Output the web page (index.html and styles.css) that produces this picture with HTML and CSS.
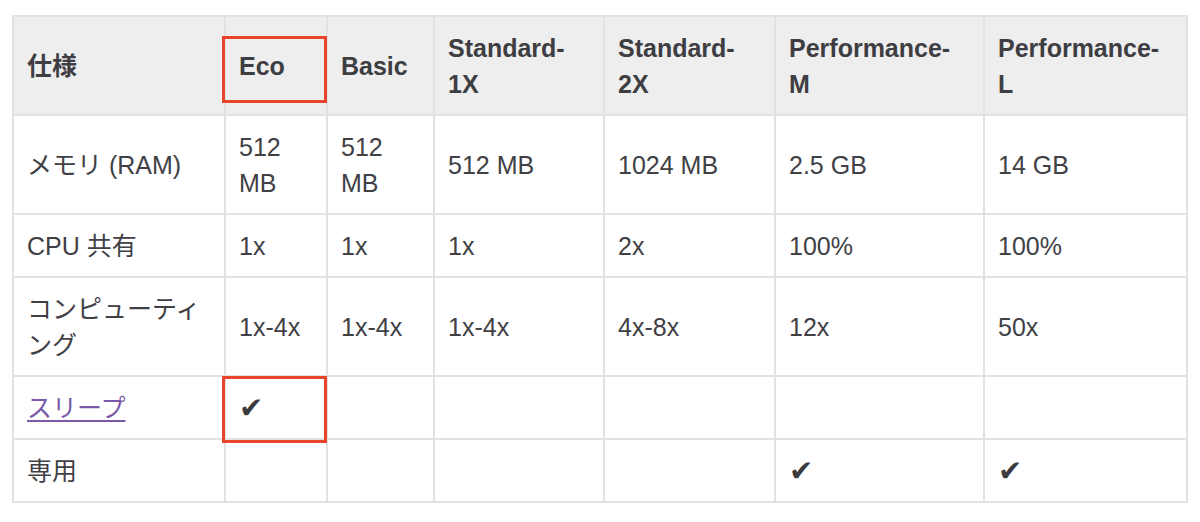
FILE: index.html
```html
<!DOCTYPE html>
<html lang="ja">
<head>
<meta charset="utf-8">
<link rel="stylesheet" href="styles.css">
</head>
<body>
<table class="spec">
  <colgroup>
    <col class="c1"><col class="c2"><col class="c3"><col class="c4"><col class="c5"><col class="c6"><col class="c7">
  </colgroup>
  <thead>
    <tr>
      <th>仕様</th>
      <th class="mark"><span class="hl hl-head"></span>Eco</th>
      <th>Basic</th>
      <th>Standard-<br>1X</th>
      <th>Standard-<br>2X</th>
      <th>Performance-<br>M</th>
      <th>Performance-<br>L</th>
    </tr>
  </thead>
  <tbody>
    <tr>
      <td>メモリ (RAM)</td>
      <td>512 MB</td>
      <td>512 MB</td>
      <td>512 MB</td>
      <td>1024 MB</td>
      <td>2.5 GB</td>
      <td>14 GB</td>
    </tr>
    <tr>
      <td>CPU 共有</td>
      <td>1x</td>
      <td>1x</td>
      <td>1x</td>
      <td>2x</td>
      <td>100%</td>
      <td>100%</td>
    </tr>
    <tr>
      <td>コンピューティ<br>ング</td>
      <td>1x-4x</td>
      <td>1x-4x</td>
      <td>1x-4x</td>
      <td>4x-8x</td>
      <td>12x</td>
      <td>50x</td>
    </tr>
    <tr>
      <td><a class="link" href="#sleep">スリープ</a></td>
      <td class="mark"><span class="hl hl-cell"></span><span class="check">✔</span></td>
      <td></td>
      <td></td>
      <td></td>
      <td></td>
      <td></td>
    </tr>
    <tr>
      <td>専用</td>
      <td></td>
      <td></td>
      <td></td>
      <td></td>
      <td><span class="check">✔</span></td>
      <td><span class="check">✔</span></td>
    </tr>
  </tbody>
</table>
</body>
</html>
```

FILE: styles.css
```css
html, body {
  margin: 0;
  padding: 0;
  background: #ffffff;
}

body {
  font-family: "Liberation Sans", "Noto Sans CJK JP", Arial, sans-serif;
  color: #3e3e42;
}

.spec {
  margin: 15px 0 0 12px;
  width: 1174px;
  border-collapse: collapse;
  table-layout: fixed;
  font-size: 25px;
  line-height: 36px;
}

.c1 { width: 212px; }
.c2 { width: 102px; }
.c3 { width: 107px; }
.c4 { width: 170px; }
.c5 { width: 171px; }
.c6 { width: 209px; }
.c7 { width: 203px; }

.spec th,
.spec td {
  border: 2px solid #e2e2e2;
  padding: 12.5px 13px;
  text-align: left;
  vertical-align: middle;
  word-wrap: break-word;
}

.spec th {
  background: #eeeeee;
  font-weight: 700;
  color: #3d3d42;
}

.spec td {
  font-weight: 400;
  color: #404045;
}

.mark {
  position: relative;
}

.hl {
  position: absolute;
  border: 3px solid #e8432b;
  box-sizing: border-box;
  pointer-events: none;
}

.hl-head {
  left: -4px;
  top: 19px;
  width: 105px;
  height: 67px;
}

.hl-cell {
  left: -4px;
  top: -1px;
  width: 105px;
  height: 67px;
}

.link {
  color: #7a5aa8;
  text-decoration: underline;
  text-underline-offset: 3px;
}

.check {
  display: inline-block;
  font-family: "DejaVu Sans", sans-serif;
  font-size: 29px;
  line-height: 36px;
  vertical-align: top;
  color: #3a3a3f;
}
```
